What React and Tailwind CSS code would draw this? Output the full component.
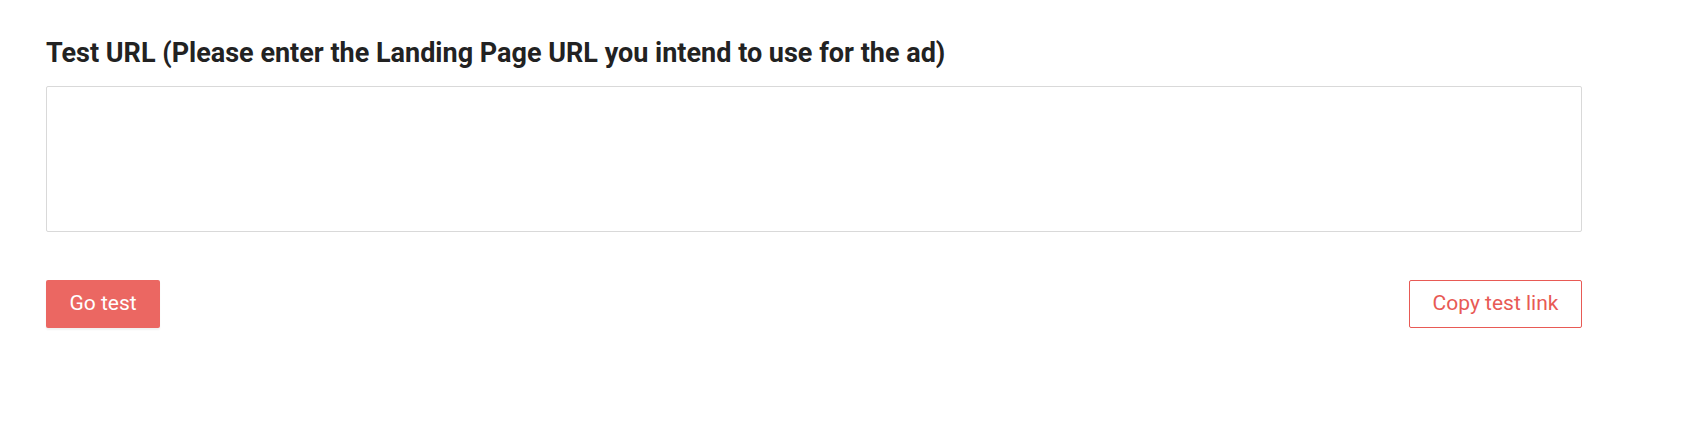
export default function App() {
  return (
    <div className="w-[1684px] h-[430px] bg-white font-['Roboto',sans-serif]">
      <div className="w-[1536px] ml-[46px] pt-[35px]">
        <h2 className="text-[27px] leading-[36px] font-bold text-[#222222]">
          Test URL (Please enter the Landing Page URL you intend to use for the ad)
        </h2>
        <textarea className="mt-[15px] block w-full h-[146px] border border-[#d9d9d9] rounded-[2px] resize-none outline-none p-3 text-[16px]" />
        <div className="mt-[48px] flex justify-between items-center">
          <button className="h-[48px] w-[114px] bg-[#eb6762] text-white text-[21px] rounded-[2px] shadow-[0_2px_2px_rgba(0,0,0,0.06)]">
            Go test
          </button>
          <button className="h-[48px] w-[173px] border border-[#e85a55] text-[#e85a55] text-[21px] rounded-[2px] bg-white">
            Copy test link
          </button>
        </div>
      </div>
    </div>
  );
}
